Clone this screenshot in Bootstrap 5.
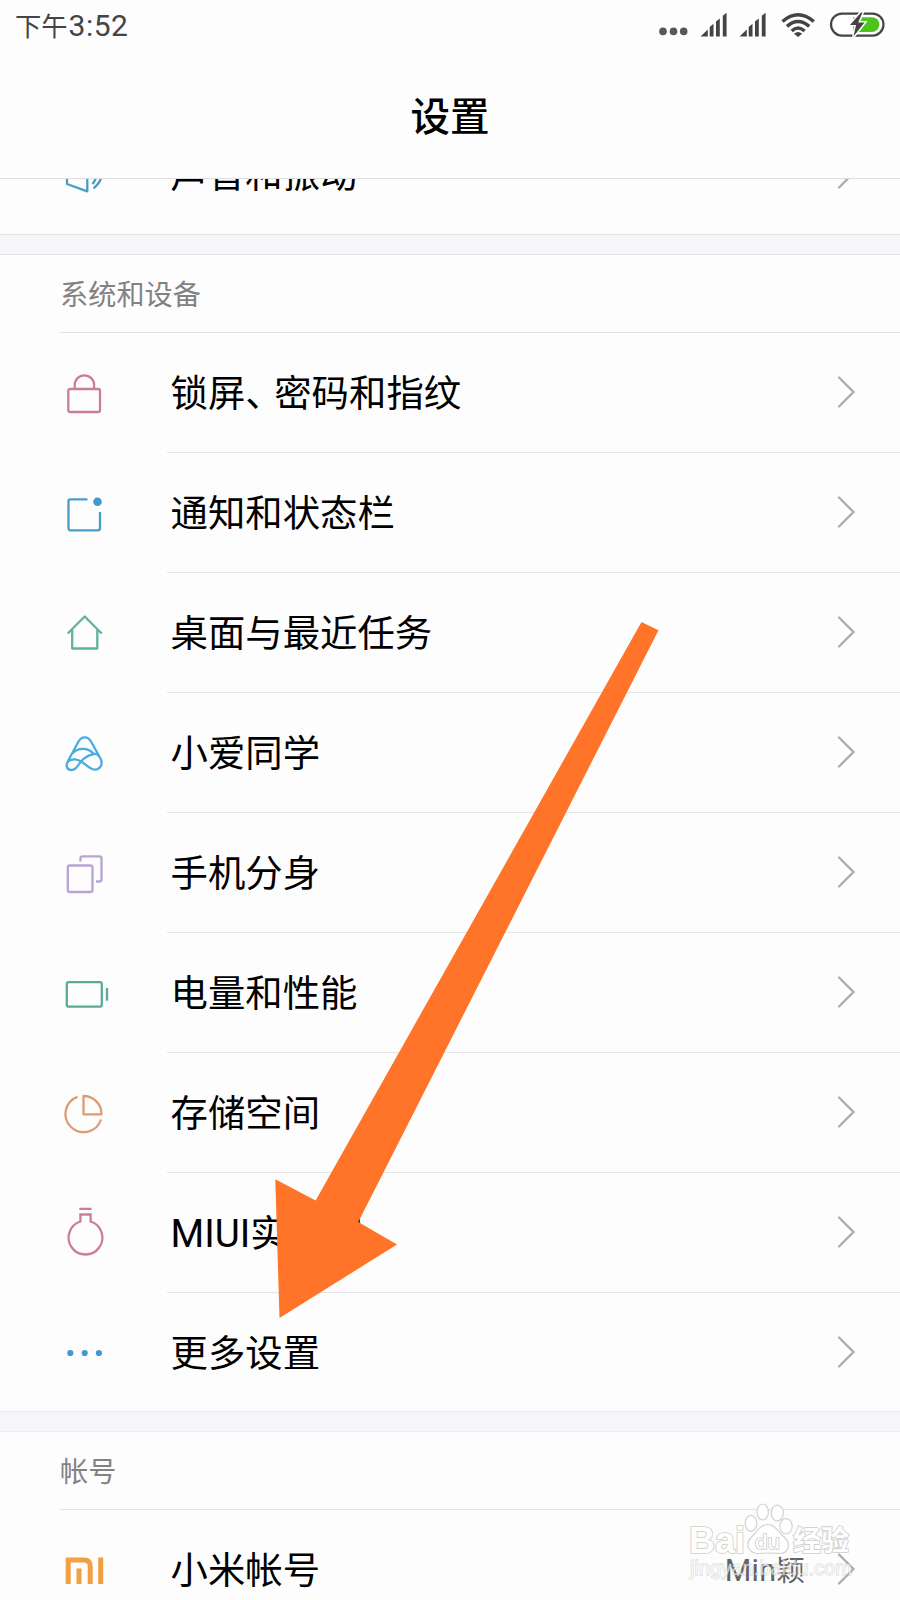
<!DOCTYPE html>
<html lang="zh-CN">
<head>
<meta charset="utf-8">
<meta name="viewport" content="width=device-width, initial-scale=1">
<title>设置</title>
<link href="https://cdn.jsdelivr.net/npm/bootstrap@5.3.0/dist/css/bootstrap.min.css" rel="stylesheet">
<style>
  body { background: #fdfdfd; color: #000; font-family: "Noto Sans CJK SC", sans-serif; }
  .screen { width: 900px; height: 1600px; }
  .status-row { height: 54px; padding-left: 15px; color: #444446; font-size: 26.3px; line-height: 50px; }
  .clock-digits { font-family: Roboto, sans-serif; font-size: 30px; letter-spacing: .5px; margin-left: 1px; }
  .title-row { height: 124px; font-size: 39.5px; font-weight: 500; line-height: 120px; }
  .page-top { height: 179px; border-bottom: 1px solid #dedee0; }
  .clipped { height: 55px; }
  .band { height: 21px; background: #f6f5f9; border-top: 1px solid #e3e2e5; border-bottom: 1px solid #e3e2e5; }
  .band.lower { margin-top: -2px; border-color: #ececef; }
  .group-title { height: 78px; margin-left: 60px; font-size: 28.2px; color: #828284; border-bottom: 1px solid #e2e2e4; padding-bottom: 1px; }
  .item { height: 120px; padding-left: 60px; }
  .item-icon { width: 60px; height: 60px; margin-right: 47px; margin-top: -2px; fill: none; stroke-width: 2.3; stroke-linejoin: round; }
  .item-body { height: 120px; border-bottom: 1px solid #e4e4e6; font-size: 37.4px; padding-left: 3.5px; padding-right: 43px; }
  .item-body.last { border-bottom-color: transparent; }
  .item-text { line-height: 60px; margin-top: -2px; padding-bottom: 1px; }
  .latin { font-family: Roboto, sans-serif; font-size: 38.6px; line-height: 1; }
  .comma { margin-right: -8.5px; }
  .chev { width: 20px; height: 34px; fill: none; stroke: #adadad; stroke-width: 2.3; stroke-linecap: round; margin-top: -1px; }
  .owner { font-size: 28.5px; color: #626264; margin-right: 32px; margin-top: -1px; }
  .owner-latin { font-family: Roboto, sans-serif; font-size: 30.5px; line-height: 1; letter-spacing: .3px; }
  .overlay { pointer-events: none; }
</style>
</head>
<body>
<div class="screen position-relative overflow-hidden">
  <header class="page-top">
    <div class="status-row d-flex justify-content-between">
      <div>下午<span class="clock-digits">3:52</span></div>
      <svg width="260" height="54" viewBox="640 0 260 54">
        <g fill="#58585a"><circle cx="663" cy="31.4" r="3.8"/><circle cx="673.5" cy="31.4" r="3.8"/><circle cx="683.7" cy="31.4" r="3.8"/></g>
        <g fill="#444446">
          <path id="sig" d="M700.5 36.5L707.8 29.5V36.5ZM709.7 36.5V27l3.8-3.2V36.5ZM716 36.5V21.5l3.8-3V36.5ZM722.8 36.5V15.7l3.8-3V36.5Z"/>
          <use href="#sig" x="39"/>
        </g>
        <g fill="none" stroke="#444446" stroke-width="3.5">
          <path d="M782.5 21.5Q798 8 813.8 21.5"/>
          <path d="M787 26.4Q798 16.6 809.2 26.4"/>
          <path d="M791.7 31Q798 25 804.6 31"/>
        </g>
        <path d="M794 33.7Q798 30.3 802.2 33.7L798.1 37Z" fill="#444446"/>
        <rect x="831" y="13.6" width="52.5" height="22" rx="11" fill="#fff" stroke="#444446" stroke-width="2.2"/>
        <path d="M853 17.2H872a7.4 7.4 0 0 1 0 14.8H853Z" fill="#4cc41c"/>
        <path d="M861 12.5L850 25h6L853.500 36.500L864.500 22.500h-6.300L862.500 12.500Z" fill="#444446" stroke="#fff" stroke-width="3" paint-order="stroke"/>
      </svg>
    </div>
    <div class="title-row text-center">设置</div>
  </header>

  <div class="clipped overflow-hidden d-flex align-items-end">
    <div class="item d-flex align-items-center w-100 flex-shrink-0">
      <svg class="item-icon" stroke="#4a9dc4" viewBox="0 0 60 60"><path d="M7 22V41L27.3 48.3V14L7 22M32.5 22Q40 32 32.5 41M33.5 16.500Q50 31 33.500 45.500"/></svg>
      <div class="item-body last flex-grow-1 d-flex align-items-center justify-content-between"><span class="item-text">声音和振动</span><svg class="chev" viewBox="0 0 20 34"><path d="M2 2.500L16.500 17L2 31.500"/></svg></div>
    </div>
  </div>
  <div class="band"></div>

  <section>
    <div class="group-title d-flex align-items-center">系统和设备</div>
    <div class="item d-flex align-items-center">
      <svg class="item-icon" stroke="#c97f92" viewBox="0 0 60 60"><rect x="8.300" y="27" width="31.700" height="23" rx="2"/><path d="M14.700 26.500V23A9.700 9.700 0 0 1 34.100 23V26.500"/></svg>
      <div class="item-body flex-grow-1 d-flex align-items-center justify-content-between"><span class="item-text">锁屏<span class="comma">、</span>密码和指纹</span><svg class="chev" viewBox="0 0 20 34"><path d="M2 2.500L16.500 17L2 31.500"/></svg></div>
    </div>
    <div class="item d-flex align-items-center">
      <svg class="item-icon" stroke="#4a9dc4" viewBox="0 0 60 60"><path d="M27.500 17.300H10.500Q8.500 17.300 8.500 19V46Q8.500 48.300 10.500 48.300H38Q40 48.300 40 46V30"/><circle cx="37.500" cy="19.700" r="4.300" fill="#3f9bcb" stroke="none"/></svg>
      <div class="item-body flex-grow-1 d-flex align-items-center justify-content-between"><span class="item-text">通知和状态栏</span><svg class="chev" viewBox="0 0 20 34"><path d="M2 2.500L16.500 17L2 31.500"/></svg></div>
    </div>
    <div class="item d-flex align-items-center">
      <svg class="item-icon" stroke="#5fb3a0" viewBox="0 0 60 60"><path d="M7.700 31.500L24.700 14.500L41.700 31.500M12.200 28V46.500H37.300V28"/></svg>
      <div class="item-body flex-grow-1 d-flex align-items-center justify-content-between"><span class="item-text">桌面与最近任务</span><svg class="chev" viewBox="0 0 20 34"><path d="M2 2.500L16.500 17L2 31.500"/></svg></div>
    </div>
    <div class="item d-flex align-items-center">
      <svg class="item-icon" stroke="#4aacdf" stroke-linecap="round" viewBox="0 0 60 60"><path d="M8 39L18.500 19.500C21.500 14 28 14 31 19.500L40.500 36.500C44 44 38 49.500 32 47C26 44.500 22 37.500 15 37.300C9 37 6.200 40.500 6.700 44C7.300 48.500 12.500 49 15.500 46.500C19.500 43 22 34 34 32C36.500 31.600 38.500 33 39.500 35M12.200 31.500C18 25.500 27.500 25 34 32"/></svg>
      <div class="item-body flex-grow-1 d-flex align-items-center justify-content-between"><span class="item-text">小爱同学</span><svg class="chev" viewBox="0 0 20 34"><path d="M2 2.500L16.500 17L2 31.500"/></svg></div>
    </div>
    <div class="item d-flex align-items-center">
      <svg class="item-icon" stroke="#b9a3d3" viewBox="0 0 60 60"><rect x="7.800" y="23.500" width="24.700" height="26.500" rx="2"/><path d="M20.500 19.500V16.300Q20.500 14.300 22.500 14.300H39.500Q41.500 14.300 41.500 16.300V37.500Q41.500 39.500 39.500 39.500H36"/></svg>
      <div class="item-body flex-grow-1 d-flex align-items-center justify-content-between"><span class="item-text">手机分身</span><svg class="chev" viewBox="0 0 20 34"><path d="M2 2.500L16.500 17L2 31.500"/></svg></div>
    </div>
    <div class="item d-flex align-items-center">
      <svg class="item-icon" stroke="#5aaa96" viewBox="0 0 60 60"><rect x="6.800" y="20.200" width="35" height="24.500" rx="2"/><path d="M47 26V38.700"/></svg>
      <div class="item-body flex-grow-1 d-flex align-items-center justify-content-between"><span class="item-text">电量和性能</span><svg class="chev" viewBox="0 0 20 34"><path d="M2 2.500L16.500 17L2 31.500"/></svg></div>
    </div>
    <div class="item d-flex align-items-center">
      <svg class="item-icon" stroke="#e09b72" viewBox="0 0 60 60"><path d="M17.500 14.800A18.200 18.200 0 1 0 41 37.500M23.500 14V32.300H41.500A18 18 0 0 0 23.500 14Z"/></svg>
      <div class="item-body flex-grow-1 d-flex align-items-center justify-content-between"><span class="item-text">存储空间</span><svg class="chev" viewBox="0 0 20 34"><path d="M2 2.500L16.500 17L2 31.500"/></svg></div>
    </div>
    <div class="item d-flex align-items-center">
      <svg class="item-icon" stroke="#cf7d91" viewBox="0 0 60 60"><path d="M19.300 6.800H31.500M20.400 19.500V12.500H30.600V19.500A16.900 16.900 0 1 1 20.400 19.500Z" stroke-linejoin="miter"/></svg>
      <div class="item-body flex-grow-1 d-flex align-items-center justify-content-between"><span class="item-text"><span class="latin">MIUI</span>实验室</span><svg class="chev" viewBox="0 0 20 34"><path d="M2 2.500L16.500 17L2 31.500"/></svg></div>
    </div>
    <div class="item d-flex align-items-center">
      <svg class="item-icon" viewBox="0 0 60 60"><g fill="#3f9bcb"><circle cx="10.300" cy="31" r="3.100"/><circle cx="24.700" cy="31" r="3.100"/><circle cx="38.900" cy="31" r="3.100"/></g></svg>
      <div class="item-body last flex-grow-1 d-flex align-items-center justify-content-between"><span class="item-text">更多设置</span><svg class="chev" viewBox="0 0 20 34"><path d="M2 2.500L16.500 17L2 31.500"/></svg></div>
    </div>
  </section>
  <div class="band lower"></div>

  <section>
    <div class="group-title d-flex align-items-center">帐号</div>
    <div class="item d-flex align-items-center">
      <svg class="item-icon" stroke="#f2a042" viewBox="0 0 60 60"><path d="M8.200 45V21H24Q30.200 21 30.200 27V45M19 29.500V45M40.700 18.500V45" stroke-width="5" stroke-linejoin="miter"/></svg>
      <div class="item-body last flex-grow-1 d-flex align-items-center"><span class="item-text me-auto">小米帐号</span><span class="owner"><span class="owner-latin">Min</span>颖</span><svg class="chev" viewBox="0 0 20 34"><path d="M2 2.500L16.500 17L2 31.500"/></svg></div>
    </div>
  </section>

  <svg class="overlay position-absolute top-0 start-0" width="900" height="1600" viewBox="0 0 900 1600">
    <polygon fill="#ff7429" points="641.5,622 658.5,630.300 358.300,1222 397,1244.500 279.500,1318 275.300,1179.300 315.600,1200.500"/>
    <g fill="#fff" stroke="#d2d2d2" stroke-width="1.200">
      <ellipse cx="762.700" cy="1512" rx="5.700" ry="8"/><ellipse cx="777.300" cy="1513" rx="6" ry="7.800"/>
      <ellipse cx="751" cy="1523.300" rx="5.800" ry="8"/><ellipse cx="786" cy="1526.300" rx="6.200" ry="7.700"/>
      <path d="M768 1524.500C775 1524.500 778 1532 784 1537C792 1544 788 1554 779 1553.500C772 1553 766 1552.500 760 1553.500C749 1554 744 1545 751.500 1537C757 1532 760 1524.500 768 1524.500Z"/>
    </g>
    <g fill="#fff" stroke="#cecece" stroke-width="1.700" paint-order="stroke" font-family="Liberation Sans, Noto Sans CJK SC, sans-serif" font-weight="700">
      <text x="689" y="1553" font-size="36" textLength="56" lengthAdjust="spacingAndGlyphs">Bai</text>
      <text x="755" y="1549" font-size="21" font-weight="400" textLength="25" lengthAdjust="spacingAndGlyphs">du</text>
      <text x="793" y="1551" font-size="28" textLength="56" lengthAdjust="spacingAndGlyphs">经验</text>
    </g>
    <text x="690" y="1575" font-family="Liberation Sans, sans-serif" font-size="20" fill="#fff" fill-opacity=".6" stroke="#aaa" stroke-opacity=".35" stroke-width="1.300" paint-order="stroke" textLength="162" lengthAdjust="spacingAndGlyphs">jingyan.baidu.com</text>
  </svg>
</div>
<script src="https://cdn.jsdelivr.net/npm/bootstrap@5.3.0/dist/js/bootstrap.bundle.min.js"></script>
</body>
</html>
